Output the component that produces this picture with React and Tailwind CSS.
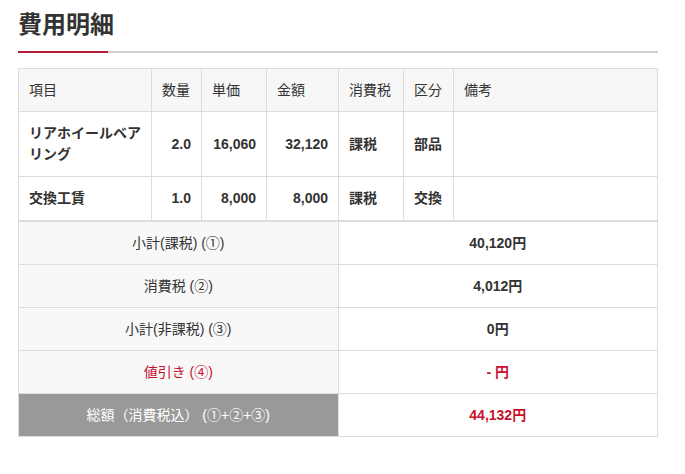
import React from "react";

const items = [
  { name: "リアホイールベアリング", qty: "2.0", price: "16,060", amount: "32,120", tax: "課税", kind: "部品", note: "" },
  { name: "交換工賃", qty: "1.0", price: "8,000", amount: "8,000", tax: "課税", kind: "交換", note: "" },
];

const summary = [
  { label: "小計(課税) (①)", value: "40,120円" },
  { label: "消費税 (②)", value: "4,012円" },
  { label: "小計(非課税) (③)", value: "0円" },
  { label: "値引き (④)", value: "- 円", red: true },
];

function App() {
  return (
    <div
      className="bg-white w-[685px] h-[474px] text-[#333] text-[14px]"
      style={{ fontFamily: '"Liberation Sans", "Noto Sans CJK JP", sans-serif' }}
    >
      <div className="ml-[18px] w-[640px] pt-[7px]">
        {/* title */}
        <h2 className="text-[24px] font-bold leading-[36px] text-[#333] pb-[8px]">費用明細</h2>
        <div className="flex h-[2px]">
          <div className="w-[90px] bg-[#b41f35]" />
          <div className="flex-1 bg-[#cfcfcf]" />
        </div>

        {/* item table */}
        <table className="w-full table-fixed border-collapse mt-[15px] leading-[21px]">
          <colgroup>
            <col className="w-[133px]" />
            <col className="w-[50px]" />
            <col className="w-[65px]" />
            <col className="w-[72px]" />
            <col className="w-[65px]" />
            <col className="w-[50px]" />
            <col />
          </colgroup>
          <thead>
            <tr className="bg-[#f7f7f7] h-[43px]">
              {["項目", "数量", "単価", "金額", "消費税", "区分", "備考"].map((h) => (
                <th key={h} className="border border-[#dcdcdc] text-left font-normal pl-[10px] pr-[4px] py-[10px]">
                  {h}
                </th>
              ))}
            </tr>
          </thead>
          <tbody className="font-bold">
            {items.map((it) => (
              <tr key={it.name} className="h-[43px]">
                <td className="border border-[#dcdcdc] pl-[10px] pr-[6px] py-[11px]">{it.name}</td>
                <td className="border border-[#dcdcdc] text-right pr-[10px]">{it.qty}</td>
                <td className="border border-[#dcdcdc] text-right pr-[10px]">{it.price}</td>
                <td className="border border-[#dcdcdc] text-right pr-[10px]">{it.amount}</td>
                <td className="border border-[#dcdcdc] pl-[10px]">{it.tax}</td>
                <td className="border border-[#dcdcdc] pl-[10px]">{it.kind}</td>
                <td className="border border-[#dcdcdc] pl-[10px]">{it.note}</td>
              </tr>
            ))}
          </tbody>
        </table>

        {/* summary table */}
        <table className="w-full table-fixed border-collapse leading-[21px]">
          <tbody>
            {summary.map((s) => (
              <tr key={s.label} className="h-[43px]">
                <td className={`border border-[#dcdcdc] bg-[#f8f8f8] text-center ${s.red ? "text-[#c8102e]" : ""}`}>
                  {s.label}
                </td>
                <td className={`border border-[#dcdcdc] text-center font-bold ${s.red ? "text-[#c8102e]" : ""}`}>
                  {s.value}
                </td>
              </tr>
            ))}
            <tr className="h-[43px]">
              <td className="border border-[#dcdcdc] bg-[#999999] text-white text-center">
                総額（消費税込） (①+②+③)
              </td>
              <td className="border border-[#dcdcdc] text-center font-bold text-[#c8102e]">44,132円</td>
            </tr>
          </tbody>
        </table>
      </div>
    </div>
  );
}

export default App;
